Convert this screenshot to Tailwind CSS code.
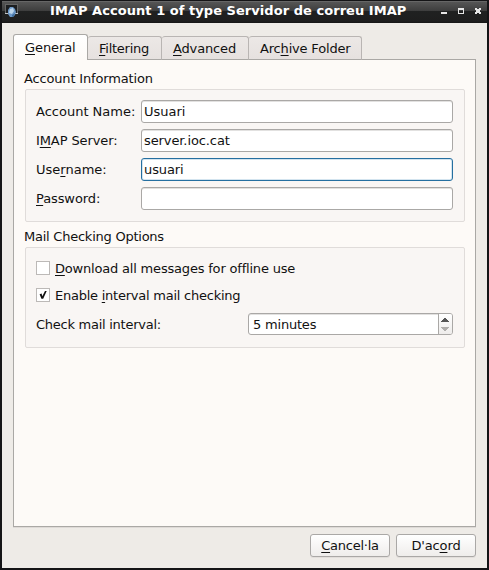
<!DOCTYPE html>
<html lang="ca">
<head>
<meta charset="utf-8">
<title>IMAP Account</title>
<script src="https://cdn.jsdelivr.net/npm/@tailwindcss/browser@4"></script>
</head>
<body class="w-[489px] h-[570px] overflow-hidden bg-[#141416] font-['DejaVu_Sans',sans-serif] text-[13px] leading-[16px] text-[#111] whitespace-nowrap [&_u]:underline-offset-2 [&_u]:decoration-1 [&_u]:[text-decoration-skip-ink:none]">
<div class="w-[489px] h-[570px] flex flex-col">
  <header class="h-[23px] shrink-0 flex items-start bg-[linear-gradient(#141416_0px,#141416_1px,#777_1px,#555_2px,#3d3d3d_11px,#202121_11px,#1e1e1e_21px,#151515_23px)] border-x-2 border-[#141416] text-white">
    <svg class="w-4 h-4 mt-[3px] ml-[2px] shrink-0" viewBox="0 0 16 16">
      <rect x="1.5" y="1.5" width="12" height="9" fill="#1c1e20" stroke="#666"/>
      <path d="M1 10.5H14" stroke="#bfc2c4"/>
      <path d="M6 4L9 4L11 6L12 9L11 12L9 14L6 14L4 11L4 7Z" fill="#6c98c8"/>
      <path d="M6 6L9 5L10 8L8 11L5 10Z" fill="#bcd5ea"/>
      <path d="M8 12L11 10L10 13L8 14Z" fill="#416f9f"/>
    </svg>
    <h1 class="ml-[30px] mt-[3px] w-[370px] font-bold tracking-[0.045px]">IMAP Account 1 of type Servidor de correu IMAP</h1>
    <svg class="w-[48px] h-[10px] mt-[6px] ml-[19px] shrink-0" viewBox="0 0 48 10" shape-rendering="crispEdges" fill="#e6e6e6">
      <path d="M2 6h6v2h-6z"/>
      <path fill-rule="evenodd" d="M19 2h6v6h-6zM20 4v3h4v-3z"/>
      <path d="M36 2h2v1h2v-1h2v2h-1v2h1v2h-2v-1h-2v1h-2v-2h1v-2h-1z"/>
    </svg>
  </header>
  <main class="h-[545px] ml-[2px] mr-[2px] bg-[#eeebe7] pt-[11px] pl-[11px] pr-[11px] flex flex-col">
    <nav class="h-[26px] flex items-end shrink-0 relative z-10 -mb-px">
      <div class="w-[75px] h-[26px] border border-b-0 border-[#aaa8a5] rounded-t-[3px] bg-linear-to-b from-white to-[#fdfaf7] pl-[11px] pt-[5px] tracking-[-0.1px]"><u>G</u>eneral</div>
      <div class="w-[74px] h-[24px] border border-l-0 border-[#b9b5b3] border-b-[#aaa8a5] rounded-t-[3px] bg-linear-to-b from-[#ece8e6] to-[#e6e1df] pl-[11px] pt-[4px] tracking-[-0.25px]"><u>F</u>iltering</div>
      <div class="w-[87px] h-[24px] border border-l-0 border-[#b9b5b3] border-b-[#aaa8a5] rounded-t-[3px] bg-linear-to-b from-[#ece8e6] to-[#e6e1df] pl-[11px] pt-[4px] tracking-[-0.15px]"><u>A</u>dvanced</div>
      <div class="w-[113px] h-[24px] border border-l-0 border-[#b9b5b3] border-b-[#aaa8a5] rounded-t-[3px] bg-linear-to-b from-[#ece8e6] to-[#e6e1df] pl-[11px] pt-[4px] tracking-[-0.18px]">Arc<u>h</u>ive Folder</div>
    </nav>
    <section class="h-[468px] shrink-0 border border-[#aaa8a5] bg-[#fdfaf7] shadow-[0_1px_0_#dedad7] px-[10px] pt-[11px]">
      <h2 class="h-[18px] tracking-[-0.16px]">Account Information</h2>
      <div class="ml-px w-[440px] h-[133px] border border-[#e0dcda] rounded-[2px] bg-[#f9f6f4] pt-[10px] pl-[10px] flex flex-col gap-[6px]">
        <label class="flex h-[23px] items-center"><span class="w-[105px]">Account Name:</span><span class="w-[312px] h-[23px] border border-[#aaa8a6] rounded-[3px] bg-white shadow-[inset_0_1px_0_#e2e1e0] pl-[2px] pt-[3px]">Usuari</span></label>
        <label class="flex h-[23px] items-center"><span class="w-[105px] tracking-[-0.1px]">I<u>M</u>AP Server:</span><span class="w-[312px] h-[23px] border border-[#aaa8a6] rounded-[3px] bg-white shadow-[inset_0_1px_0_#e2e1e0] pl-[2px] pt-[3px] tracking-[-0.1px]">server.ioc.cat</span></label>
        <label class="flex h-[23px] items-center"><span class="w-[105px]">Use<u>r</u>name:</span><span class="w-[312px] h-[23px] border border-[#256fa0] rounded-[3px] bg-white shadow-[inset_0_0_0_1px_#d3e4ef] pl-[2px] pt-[3px] tracking-[-0.1px]">usuari</span></label>
        <label class="flex h-[23px] items-center"><span class="w-[105px] tracking-[-0.1px]"><u>P</u>assword:</span><span class="w-[312px] h-[23px] border border-[#aaa8a6] rounded-[3px] bg-white shadow-[inset_0_1px_0_#e2e1e0]"></span></label>
      </div>
      <h2 class="h-[18px] mt-[7px] tracking-[-0.24px]">Mail Checking Options</h2>
      <div class="ml-px w-[440px] h-[101px] border border-[#e0dcda] rounded-[2px] bg-[#f9f6f4] pt-[13px] pl-[10px]">
        <label class="flex h-[14px] items-center gap-[5px]"><span class="w-[14px] h-[14px] border border-[#bcb9b7] bg-white"></span><span class="pt-[2px] tracking-[-0.19px]"><u>D</u>ownload all messages for offline use</span></label>
        <label class="flex h-[14px] mt-[13px] items-center gap-[5px]"><span class="w-[14px] h-[14px] border border-[#bcb9b7] bg-white"><svg class="block w-3 h-3" viewBox="0 0 12 12"><path d="M2.6 5.2L4.6 4.6L5.3 7.2L8 2L9.7 2L6.2 9.8L4.4 9.8Z" fill="#111"/></svg></span><span class="pt-[2px] tracking-[-0.24px]">Enable <u>i</u>nterval mail checking</span></label>
        <div class="flex h-[22px] mt-[11px] items-center">
          <span class="w-[212px] pt-px tracking-[-0.26px]">Check mail interval:</span>
          <span class="w-[205px] h-[22px] border border-[#aaa8a6] rounded-[3px] bg-white shadow-[inset_0_1px_0_#e2e1e0] flex overflow-hidden">
            <span class="w-[189px] pl-[4px] pt-[3px] tracking-[-0.2px]">5 minutes</span>
            <span class="w-[14px] border-l border-[#aaa8a6] bg-linear-to-b from-white to-[#eeeceb]">
              <svg class="block w-[13px] h-5" viewBox="0 0 13 20" shape-rendering="crispEdges"><path d="M5 4h2v1h1v1h1v1h1v1h-8v-1h1v-1h1v-1h1z" fill="#555"/><path d="M2 13h8v1h-1v1h-1v1h-1v1h-2v-1h-1v-1h-1v-1h-1z" fill="#b0aeac"/></svg>
            </span>
          </span>
        </div>
      </div>
    </section>
    <footer class="flex justify-end gap-[6px] mt-[7px]">
      <button class="w-[80px] h-[23px] border border-[#aaa8a6] rounded-[3px] bg-linear-to-b from-white to-[#efedeb] shadow-[0_1px_0_#e2dedb] tracking-[-0.25px]"><u>C</u>ancel·la</button>
      <button class="w-[80px] h-[23px] border border-[#aaa8a6] rounded-[3px] bg-linear-to-b from-white to-[#efedeb] shadow-[0_1px_0_#e2dedb] tracking-[-0.15px]">D'ac<u>o</u>rd</button>
    </footer>
  </main>
</div>
</body>
</html>
